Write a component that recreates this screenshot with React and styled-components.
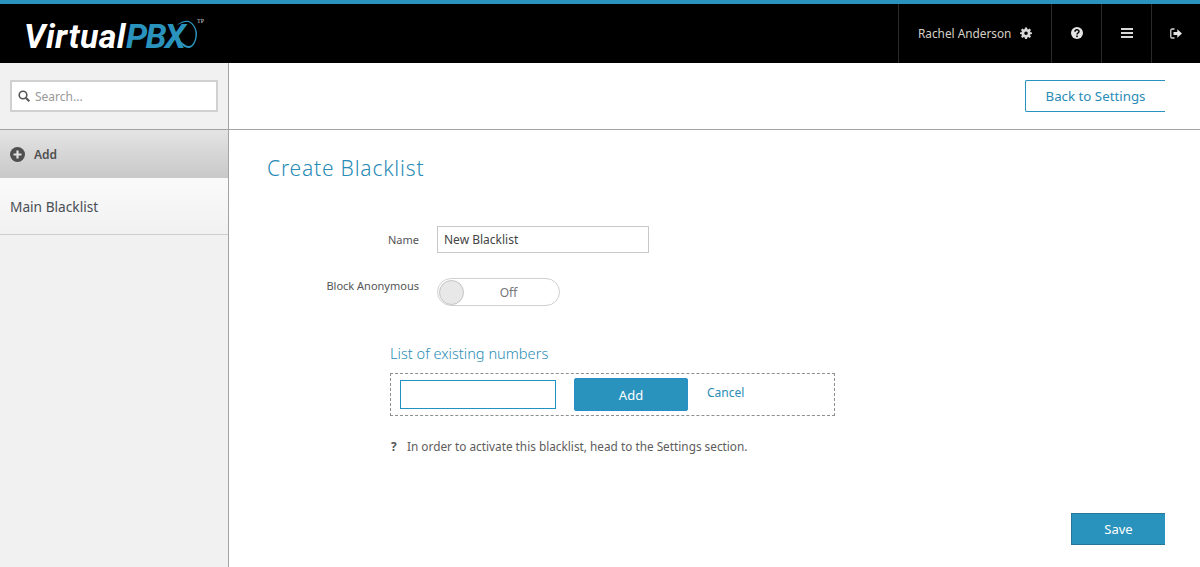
import React from "react";
import styled, { createGlobalStyle } from "styled-components";

const Global = createGlobalStyle`
  html, body { margin: 0; padding: 0; height: 100%; background: #fff; }
  body { font-family: "Noto Sans", "Open Sans", sans-serif; overflow: hidden; }
  * { box-sizing: border-box; }
`;
const Page = styled.div`display: flex; flex-direction: column; height: 567px; width: 1200px;`;
const TopBar = styled.header`
  height: 63px; flex: none; background: #000; border-top: 4px solid #2a93bd;
  display: flex; align-items: stretch; justify-content: space-between;
`;
const Logo = styled.div`display: flex; align-items: flex-start; padding: 13px 0 0 24px; position: relative; width: 230px;`;
const LogoText = styled.span`
  font-family: "Roboto", sans-serif; font-style: italic; font-weight: 700;
  font-size: 34px; line-height: 38px; letter-spacing: ${p => p.$blue ? "-1.8px" : "0.4px"}; color: ${p => p.$blue ? "#2a93bd" : "#fff"};
`;
const Swoosh = styled.svg`position: absolute; left: 160px; top: 13px;`;
const NavCells = styled.nav`display: flex; align-items: stretch;`;
const Cell = styled.div`
  width: ${p => p.$w}px; border-left: 1px solid #2a2a2a; display: flex; align-items: center;
  justify-content: ${p => p.$user ? "flex-start" : "center"};
  padding-left: ${p => p.$user ? 19 : 0}px; padding-bottom: 1px;
  color: #d8d8d8; gap: 9px;
`;
const UserName = styled.span`font-size: 11.8px; color: #d6d0c8;`;
const Body = styled.div`flex: 1; display: flex; min-height: 0;`;
const Sidebar = styled.aside`width: 229px; flex: none; background: #f1f1f1; border-right: 1px solid #a3a3a3;`;
const SearchRow = styled.div`height: 67px; padding: 17px 10px 0; border-bottom: 1px solid #a3a3a3;`;
const SearchBox = styled.div`
  width: 208px; height: 32px; background: #fff; border: 2px solid #d0d0d0;
  display: flex; align-items: center; gap: 5px; padding-left: 6px;
`;
const SearchText = styled.span`font-size: 12px; color: #999;`;
const AddRow = styled.div`
  height: 48px; background: linear-gradient(#e4e4e4, #c8c8c8); display: flex; align-items: center;
  gap: 9px; padding: 0 10px 0 10px; font-size: 12px; font-weight: 600; color: #4f4f4f;
`;
const ListItem = styled.div`
  height: 57px; background: linear-gradient(#fafafa, #f1f1f1); border-bottom: 1px solid #cfcfcf;
  display: flex; align-items: center; padding: 0 10px; font-size: 13.7px; color: #4a4f55;
`;
const Main = styled.main`flex: 1; display: flex; flex-direction: column; min-width: 0;`;
const Toolbar = styled.div`
  height: 67px; border-bottom: 1px solid #a3a3a3; display: flex; justify-content: flex-end;
  padding: 17px 35px 0 0;
`;
const BackButton = styled.div`
  width: 140px; height: 32px; border: 1px solid #2a93bd; border-right: 0; border-radius: 2px 0 0 2px;
  color: #2a8cb6; font-size: 13.3px; display: flex; align-items: center; justify-content: center; padding-bottom: 1px;
`;
const Content = styled.div`flex: 1; padding: 24px 35px 0 38px; position: relative;`;
const Title = styled.h1`margin: 0; font-size: 21px; line-height: 28px; font-weight: 300; color: #2a8cb6; letter-spacing: .8px;`;
const Row = styled.div`display: flex; align-items: ${p => p.$top ? "flex-start" : "center"}; gap: 18px; margin-top: ${p => p.$mt}px;`;
const Label = styled.label`width: 152px; text-align: right; font-size: 11px; color: #555; ${p => p.$top ? "padding-top: 0; line-height: 16px;" : ""}`;
const NameInput = styled.div`
  width: 212px; height: 27px; border: 1px solid #c8c8c8; padding-left: 6px; display: flex; align-items: center;
  font-size: 12px; color: #444;
`;
const Toggle = styled.div`
  width: 123px; height: 28px; border: 1px solid #d0d0d0; border-radius: 14px; display: flex; align-items: center;
  padding: 0 0 0 1px; position: relative;
`;
const Knob = styled.span`width: 25px; height: 25px; border-radius: 50%; background: #e8e8e8; border: 1px solid #c4c4c4; flex: none;`;
const ToggleText = styled.span`flex: 1; text-align: center; font-size: 12px; color: #777; padding-right: 6px;`;
const Indented = styled.div`margin-left: 123px;`;
const SubTitle = styled.h2`margin: 35px 0 0; font-size: 14.6px; line-height: 24px; font-weight: 300; color: #2a8cb6;`;
const DashedBox = styled.div`
  width: 445px; height: 43px; margin-top: 8px; border: 1px dashed #8f8f8f; display: flex; align-items: flex-start;
  padding: 4px 0 0 9px;
`;
const NumberInput = styled.div`width: 156px; height: 29px; margin-top: 2px; border: 1px solid #1f93c4; background: #fff;`;
const AddButton = styled.div`
  width: 114px; height: 33px; margin-left: 18px; background: #2a93bd; border: 1px solid #2a8fc8; border-radius: 2px;
  color: #fff; font-size: 13px; display: flex; align-items: center; justify-content: center;
`;
const CancelLink = styled.span`margin-left: 19px; font-size: 12px; line-height: 30px; color: #2a8cb6;`;
const Hint = styled.p`margin: 20px 0 0; display: flex; font-size: 11.8px; line-height: 20px; color: #5d5d5d;`;
const HintMark = styled.b`width: 16px; margin-left: 1px; color: #555;`;
const SaveBar = styled.div`display: flex; justify-content: flex-end; margin-top: 57px;`;
const SaveButton = styled.div`
  width: 94px; height: 32px; background: #2a93bd; border: 1px solid #25789a; border-right: 0; color: #fff;
  font-size: 13px; display: flex; align-items: center; justify-content: center;
`;

const Gear = () => (
  <svg width="12" height="12" viewBox="0 0 24 24" fill="#d8d8d8">
    <path fillRule="evenodd" d="M10 1h4l.6 3.2 1.9.8 2.7-1.9 2.8 2.8L20.1 8.6l.8 1.9L24 11v3l-3.1.6-.8 1.9 1.9 2.7-2.8 2.8-2.7-1.9-1.9.8L14 24h-4l-.6-3.1-1.9-.8-2.7 1.9L2 19.2l1.9-2.7-.8-1.9L0 14v-3l3.1-.5.8-1.9L2 5.9l2.8-2.8L7.5 5l1.9-.8zM12 9a3.5 3.5 0 1 0 0 7 3.5 3.5 0 0 0 0-7z" />
  </svg>
);
const Help = () => (
  <svg width="12" height="12" viewBox="0 0 24 24">
    <circle cx="12" cy="12" r="12" fill="#e4e4e4" />
    <path d="M8 9.5c0-5 8-5 8-.5 0 3-4 3-4 6" fill="none" stroke="#000" strokeWidth="3" />
    <rect x="10.4" y="17" width="3.2" height="3.2" fill="#000" />
  </svg>
);
const Menu = () => (
  <svg width="12" height="10" viewBox="0 0 12 10" fill="#d8d8d8">
    <rect width="12" height="2" /><rect y="4" width="12" height="2" /><rect y="8" width="12" height="2" />
  </svg>
);
const SignOut = () => (
  <svg width="12" height="11" viewBox="0 0 12 11" fill="none">
    <path d="M4.5 1H2a1.2 1.2 0 0 0-1.2 1.2v6.6A1.2 1.2 0 0 0 2 10h2.5" stroke="#d8d8d8" strokeWidth="1.3" />
    <path d="M3.5 4h3.8V1.2L12 5.5 7.3 9.8V7H3.5z" fill="#e4e4e4" />
  </svg>
);
const SearchIcon = () => (
  <svg width="12" height="12" viewBox="0 0 12 12" fill="none" stroke="#555" strokeWidth="1.6">
    <circle cx="5" cy="5" r="3.8" /><path d="M7.8 7.8 11.3 11.3" strokeWidth="2" />
  </svg>
);
const PlusCircle = () => (
  <svg width="15" height="15" viewBox="0 0 15 15">
    <circle cx="7.5" cy="7.5" r="7.5" fill="#4f4f4f" />
    <path d="M7.5 3.5v8M3.5 7.5h8" stroke="#e0e0e0" strokeWidth="2.2" />
  </svg>
);

export default function App() {
  return (
    <Page>
      <Global />
      <TopBar>
        <Logo>
          <LogoText>Virtual</LogoText><LogoText $blue>PBX</LogoText>
          <Swoosh width="46" height="36" viewBox="0 0 46 36" fill="none">
            <path d="M17 8C21 4 26 3 29 4C34 6 37 12 37 17C37 24 33 31 29 31C23 31 18 25 14 17C19 23 24 28 28 29C32 30 35.5 24 35.5 17C35.5 11 32 6 28 5C24 4.5 21 6 17 8Z" fill="#2a93bd" />
            <text x="37" y="6" fontSize="6" fill="#ccc" fontFamily="Liberation Serif, serif">TP</text>
          </Swoosh>
        </Logo>
        <NavCells>
          <Cell $w={153} $user><UserName>Rachel Anderson</UserName><Gear /></Cell>
          <Cell $w={50}><Help /></Cell>
          <Cell $w={50}><Menu /></Cell>
          <Cell $w={49}><SignOut /></Cell>
        </NavCells>
      </TopBar>
      <Body>
        <Sidebar>
          <SearchRow>
            <SearchBox><SearchIcon /><SearchText>Search...</SearchText></SearchBox>
          </SearchRow>
          <AddRow><PlusCircle />Add</AddRow>
          <ListItem>Main Blacklist</ListItem>
        </Sidebar>
        <Main>
          <Toolbar><BackButton>Back to Settings</BackButton></Toolbar>
          <Content>
            <Title>Create Blacklist</Title>
            <Row $mt={44}>
              <Label>Name</Label>
              <NameInput>New Blacklist</NameInput>
            </Row>
            <Row $mt={25} $top>
              <Label $top>Block Anonymous</Label>
              <Toggle><Knob /><ToggleText>Off</ToggleText></Toggle>
            </Row>
            <Indented>
              <SubTitle>List of existing numbers</SubTitle>
              <DashedBox>
                <NumberInput />
                <AddButton>Add</AddButton>
                <CancelLink>Cancel</CancelLink>
              </DashedBox>
              <Hint><HintMark>?</HintMark>In order to activate this blacklist, head to the Settings section.</Hint>
            </Indented>
            <SaveBar><SaveButton>Save</SaveButton></SaveBar>
          </Content>
        </Main>
      </Body>
    </Page>
  );
}
